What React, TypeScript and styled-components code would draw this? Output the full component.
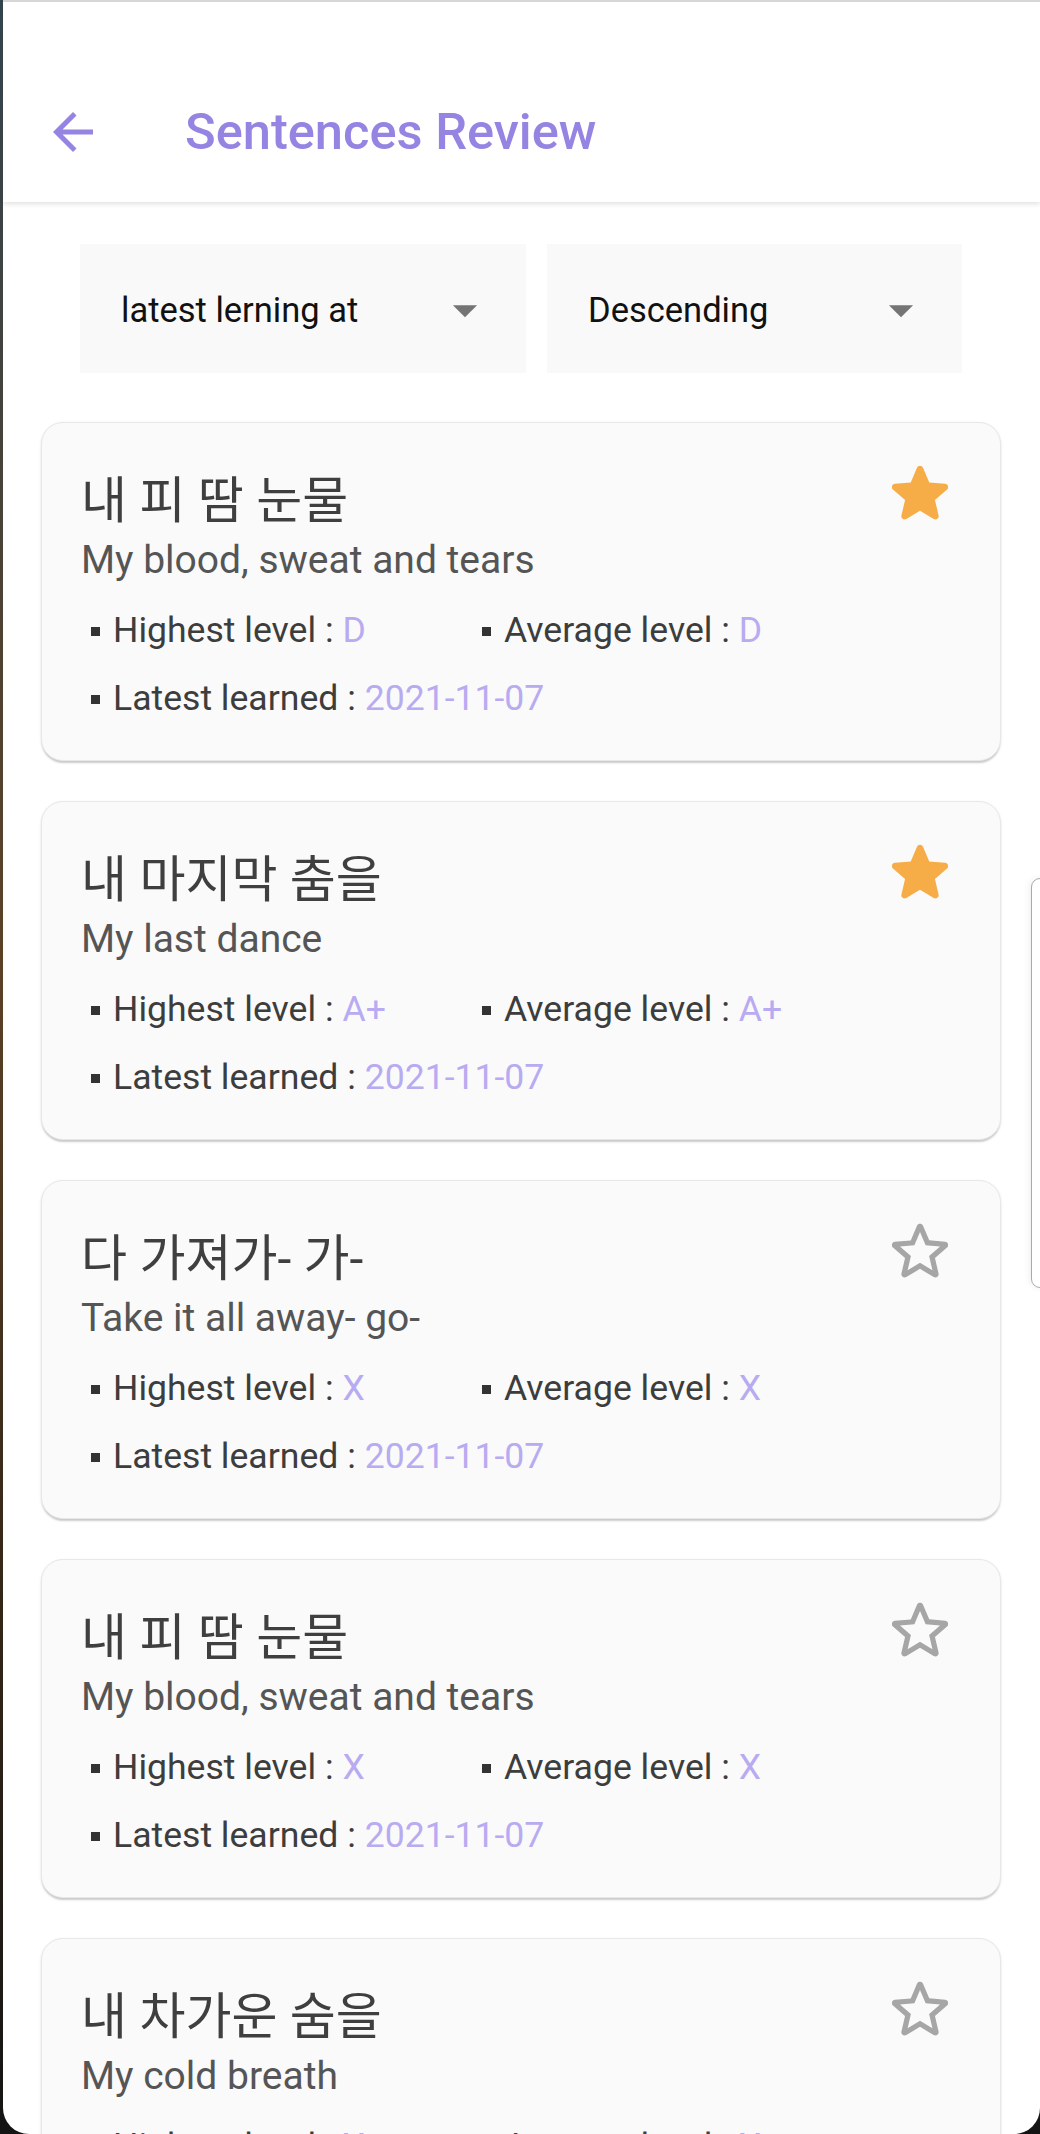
import React from "react";
import styled, { createGlobalStyle } from "styled-components";

const GlobalStyle = createGlobalStyle`
  html, body {
    margin: 0;
    padding: 0;
    background: linear-gradient(180deg, #33434d 0%, #5b4126 45%, #3a2a1a 70%, #141414 100%);
  }
  * {
    box-sizing: border-box;
  }
`;

const Screen = styled.div`
  position: relative;
  margin-left: 3px;
  width: 1037px;
  height: 2134px;
  overflow: hidden;
  background: #ffffff;
  border-top: 2px solid #d6d6d6;
  border-bottom-left-radius: 26px;
  border-bottom-right-radius: 26px;
  font-family: Roboto, "Noto Sans CJK KR", sans-serif;
`;

const Header = styled.header`
  height: 200px;
  padding: 60px 0 0 40px;
  display: flex;
  align-items: center;
  background: #ffffff;
  box-shadow: 0 2px 5px rgba(0, 0, 0, 0.12);
  position: relative;
  z-index: 1;
`;

const BackButton = styled.button`
  width: 60px;
  height: 60px;
  padding: 0;
  border: none;
  background: none;
  display: flex;
  color: #9584e2;
`;

const Title = styled.h1`
  margin: 0 0 0 82px;
  font-size: 50.6px;
  line-height: 1.2;
  font-weight: 500;
  color: #9584e2;
`;

const FilterRow = styled.div`
  display: flex;
  gap: 21px;
  margin: 42px 0 0 77px;
`;

const SelectBox = styled.div<{ $width: number }>`
  width: ${(p) => p.$width}px;
  height: 129px;
  padding: 2px 32px 0 41px;
  display: flex;
  align-items: center;
  justify-content: space-between;
  background: #f9f9f9;
  font-size: 34.5px;
  color: #111111;
`;

const CardList = styled.div`
  display: flex;
  flex-direction: column;
  gap: 40px;
  margin: 49px 0 0 38px;
  width: 960px;
`;

const Card = styled.div`
  position: relative;
  height: 339px;
  padding: 48px 40px 0 39px;
  background: #fafafa;
  border: 1.5px solid #e6e8ea;
  border-radius: 22px;
  box-shadow: 0 3px 2px -1px rgba(0, 0, 0, 0.16), 0 1px 3px rgba(0, 0, 0, 0.1);
`;

const TopRow = styled.div`
  display: flex;
  justify-content: space-between;
  align-items: flex-start;
`;

const Korean = styled.div`
  font-size: 50px;
  line-height: 60px;
  color: #3f3f3f;
`;

const StarButton = styled.div`
  margin: -6px 12px 0 0;
  display: flex;
`;

const English = styled.div`
  margin-top: 4px;
  font-size: 39px;
  line-height: 50px;
  color: #555555;
`;

const Stats = styled.div`
  margin: 11px 0 0 10px;
  display: grid;
  grid-template-columns: 391px 1fr;
`;

const Stat = styled.div<{ $wide?: boolean }>`
  grid-column: ${(p) => (p.$wide ? "1 / span 2" : "auto")};
  display: flex;
  align-items: center;
  font-size: 35.6px;
  line-height: 68px;
  color: #3d3d3d;
`;

const Bullet = styled.span`
  width: 9px;
  height: 9px;
  margin: 2px 13px 0 0;
  background: #333333;
  flex: none;
`;

const Value = styled.span`
  color: #b8abf1;
  margin-left: 0.25em;
`;

const SidePanel = styled.div`
  position: absolute;
  left: 1028px;
  top: 876px;
  width: 40px;
  height: 410px;
  border: 1.5px solid #a9a9a9;
  border-radius: 9px;
  background: rgba(255, 255, 255, 0.6);
  box-shadow: -2px 0 6px rgba(0, 0, 0, 0.06);
`;

const ArrowBack = () => (
  <svg width="60" height="60" viewBox="0 0 24 24" fill="currentColor">
    <path d="M20 11H7.83l5.59-5.59L12 4l-8 8 8 8 1.41-1.41L7.83 13H20v-2z" />
  </svg>
);

const DropArrow = () => (
  <svg width="58" height="58" viewBox="0 0 24 24" fill="#757575">
    <path d="M7 10l5 5 5-5z" />
  </svg>
);

const StarFilled = () => (
  <svg width="56" height="56" viewBox="3.5 3.5 17 16.7" fill="#f7ad47">
    <path d="M12 17.27l4.15 2.51c.76.46 1.69-.22 1.49-1.08l-1.1-4.72 3.67-3.18c.67-.58.31-1.68-.57-1.75l-4.83-.41-1.89-4.46c-.34-.81-1.5-.81-1.84 0L9.19 8.63l-4.83.41c-.88.07-1.24 1.17-.57 1.75l3.67 3.18-1.1 4.72c-.2.86.73 1.54 1.49 1.08l4.15-2.5z" />
  </svg>
);

const StarEmpty = () => (
  <svg width="56" height="56" viewBox="3.5 3.5 17 16.7" fill="#a6a6a6">
    <path d="M19.65 9.04l-4.84-.42-1.89-4.45c-.34-.81-1.5-.81-1.84 0L9.19 8.63l-4.83.41c-.88.07-1.24 1.17-.57 1.75l3.67 3.18-1.1 4.72c-.2.86.73 1.54 1.49 1.08l4.15-2.5 4.15 2.51c.76.46 1.69-.22 1.49-1.08l-1.1-4.73 3.67-3.18c.67-.58.32-1.68-.56-1.75zM12 15.4l-3.76 2.27 1-4.28-3.32-2.88 4.38-.38L12 6.1l1.71 4.04 4.38.38-3.32 2.88 1 4.28L12 15.4z" />
  </svg>
);

type Sentence = {
  ko: string;
  en: string;
  highest: string;
  average: string;
  learned: string;
  starred: boolean;
};

const sentences: Sentence[] = [
  { ko: "내 피 땀 눈물", en: "My blood, sweat and tears", highest: "D", average: "D", learned: "2021-11-07", starred: true },
  { ko: "내 마지막 춤을", en: "My last dance", highest: "A+", average: "A+", learned: "2021-11-07", starred: true },
  { ko: "다 가져가- 가-", en: "Take it all away- go-", highest: "X", average: "X", learned: "2021-11-07", starred: false },
  { ko: "내 피 땀 눈물", en: "My blood, sweat and tears", highest: "X", average: "X", learned: "2021-11-07", starred: false },
  { ko: "내 차가운 숨을", en: "My cold breath", highest: "X", average: "X", learned: "2021-11-07", starred: false },
];

const SentenceCard = ({ item }: { item: Sentence }) => (
  <Card>
    <TopRow>
      <Korean>{item.ko}</Korean>
      <StarButton>{item.starred ? <StarFilled /> : <StarEmpty />}</StarButton>
    </TopRow>
    <English>{item.en}</English>
    <Stats>
      <Stat>
        <Bullet />
        Highest level :<Value>{item.highest}</Value>
      </Stat>
      <Stat>
        <Bullet />
        Average level :<Value>{item.average}</Value>
      </Stat>
      <Stat $wide>
        <Bullet />
        Latest learned :<Value>{item.learned}</Value>
      </Stat>
    </Stats>
  </Card>
);

export default function App() {
  return (
    <>
      <GlobalStyle />
      <Screen>
        <Header>
          <BackButton aria-label="back">
            <ArrowBack />
          </BackButton>
          <Title>Sentences Review</Title>
        </Header>

        <FilterRow>
          <SelectBox $width={446}>
            <span>latest lerning at</span>
            <DropArrow />
          </SelectBox>
          <SelectBox $width={415}>
            <span>Descending</span>
            <DropArrow />
          </SelectBox>
        </FilterRow>

        <CardList>
          {sentences.map((s, i) => (
            <SentenceCard key={i} item={s} />
          ))}
        </CardList>

        <SidePanel />
      </Screen>
    </>
  );
}
